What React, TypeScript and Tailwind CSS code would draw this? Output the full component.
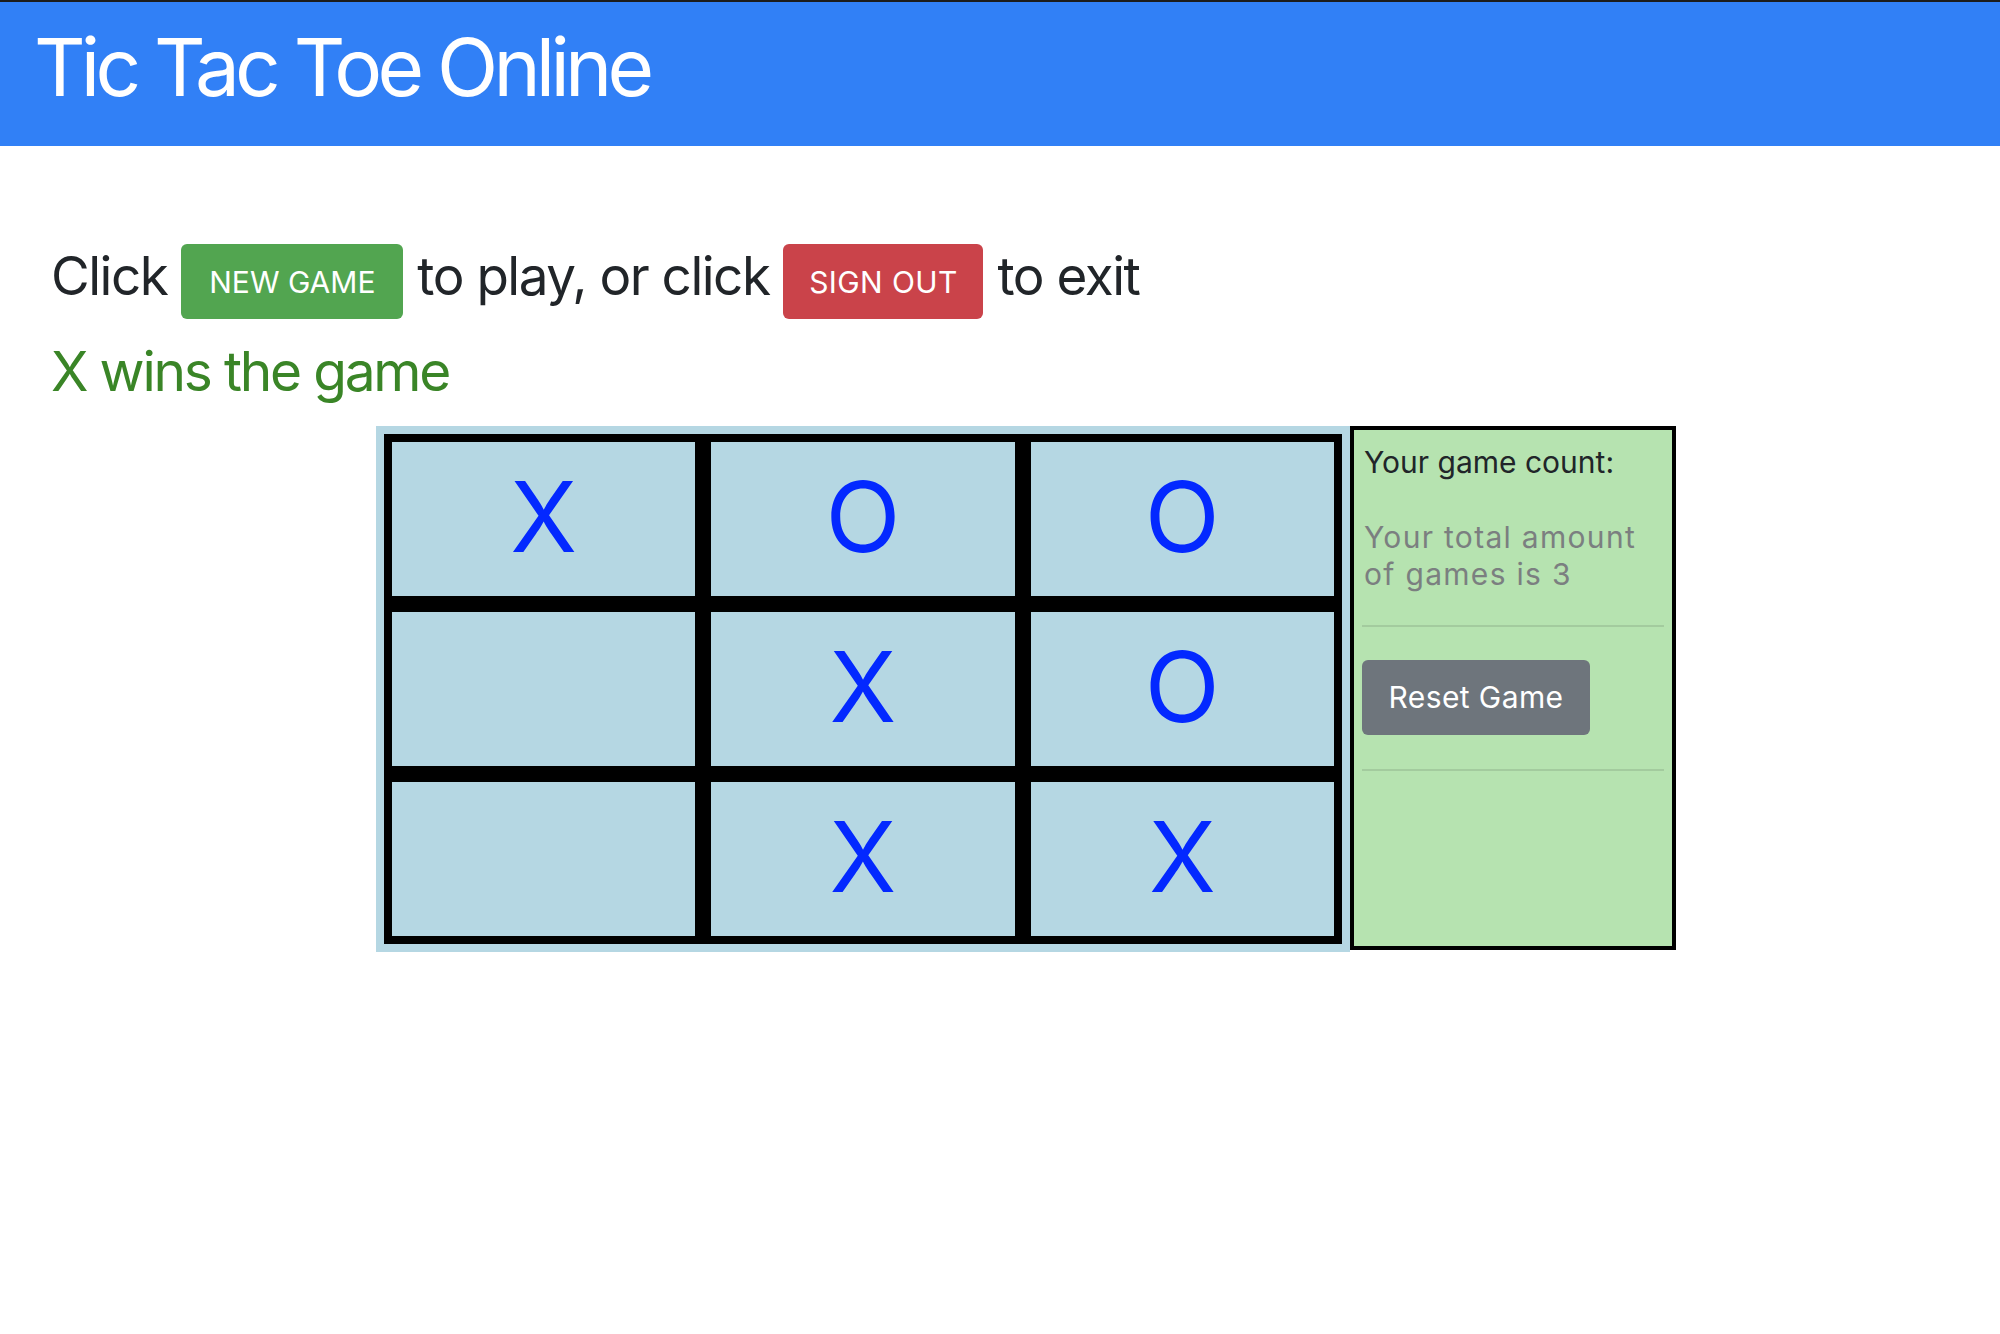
import React from "react";

type Mark = "X" | "O" | "";

const board: Mark[] = ["X", "O", "O", "", "X", "O", "", "X", "X"];

function Cell({ mark }: { mark: Mark }) {
  return (
    <div className="flex h-[170px] items-center justify-center border-8 border-black bg-[#b5d7e3] pb-[5px] text-[98px] leading-none text-[#0328ff]">
      {mark}
    </div>
  );
}

function CountPanel() {
  return (
    <div className="h-[524px] w-[326px] border-4 border-black bg-[#b6e3b0] px-[8px] pt-[14px]">
      <div className="pl-[2px] text-[30px] leading-[37.5px] text-[#212529]">Your game count:</div>
      <p className="mt-[37px] pl-[2px] text-[30px] leading-[37.5px] tracking-[1.3px] text-[#7b7f80]">
        Your total amount
        <br />
        of games is 3
      </p>
      <div className="mt-[31px] h-[2px] bg-black/10" />
      <button
        type="button"
        className="mt-[33px] flex h-[75px] w-[228px] items-center justify-center rounded-[6px] bg-[#6e757c] text-[30px] leading-none tracking-[0.4px] text-white"
      >
        Reset Game
      </button>
      <div className="mt-[34px] h-[2px] bg-black/10" />
    </div>
  );
}

export default function App() {
  return (
    <div className="min-h-screen bg-white font-['Inter',sans-serif]">
      <header className="h-[146px] border-t-2 border-[#1c1c1c] bg-[#3180f6] pl-[34px] pt-[25px]">
        <h1 className="text-[80px] leading-none tracking-[-0.06em] text-white">Tic Tac Toe Online</h1>
      </header>

      <main className="pl-[51px]">
        <div className="mt-[98px] flex items-start gap-[14px] text-[#212529]">
          <span className="mt-[6px] text-[53px] leading-none tracking-[-0.028em]">Click</span>
          <button
            type="button"
            className="flex h-[75px] w-[222px] items-center justify-center rounded-[6px] bg-[#52a550] text-[30px] leading-none text-white"
          >
            NEW GAME
          </button>
          <span className="mt-[6px] text-[53px] leading-none tracking-[-0.028em]">to play, or click</span>
          <button
            type="button"
            className="flex h-[75px] w-[200px] items-center justify-center rounded-[6px] bg-[#ca434a] text-[30px] leading-none tracking-[0.4px] text-white"
          >
            SIGN OUT
          </button>
          <span className="mt-[6px] text-[53px] leading-none tracking-[-0.028em]">to exit</span>
        </div>

        <h3 className="mt-[19px] text-[55px] leading-[66px] tracking-[-0.04em] text-[#3a8527]">X wins the game</h3>

        <div className="ml-[325px] mt-[22px] flex items-start">
          <div className="bg-[#b5d7e3] p-2">
            <div className="grid w-[958px] grid-cols-3">
              {board.map((m, i) => (
                <Cell key={i} mark={m} />
              ))}
            </div>
          </div>
          <CountPanel />
        </div>
      </main>
    </div>
  );
}
